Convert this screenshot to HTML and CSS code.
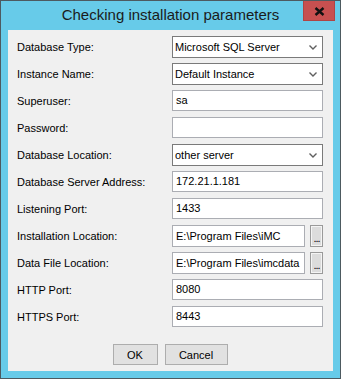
FILE: index.html
```html
<!DOCTYPE html>
<html lang="en">
<head>
    <meta charset="UTF-8">
    <title>Checking installation parameters</title>
    <link rel="stylesheet" href="styles.css">
</head>
<body>
    <div class="window">
        <div class="titlebar">
            <span></span>
            <div class="title">Checking installation parameters</div>
            <div class="close">
                <svg width="11" height="9" viewBox="0 0 11 9">
                    <path d="M1.5 1 L9.5 8 M9.5 1 L1.5 8" stroke="#111" stroke-width="2.4" fill="none"/>
                </svg>
            </div>
        </div>

        <div class="panel">
            <div class="form">
                <label>Database Type:</label>
                <div class="combo"><span>Microsoft SQL Server</span><svg class="arrow" width="8" height="5" viewBox="0 0 8 5"><path d="M0.5 0.5 L4 4 L7.5 0.5" stroke="#606060" stroke-width="1.4" fill="none"/></svg></div>

                <label>Instance Name:</label>
                <div class="combo"><span>Default Instance</span><svg class="arrow" width="8" height="5" viewBox="0 0 8 5"><path d="M0.5 0.5 L4 4 L7.5 0.5" stroke="#606060" stroke-width="1.4" fill="none"/></svg></div>

                <label>Superuser:</label>
                <div class="textbox">sa</div>

                <label>Password:</label>
                <div class="textbox"></div>

                <label>Database Location:</label>
                <div class="combo"><span>other server</span><svg class="arrow" width="8" height="5" viewBox="0 0 8 5"><path d="M0.5 0.5 L4 4 L7.5 0.5" stroke="#606060" stroke-width="1.4" fill="none"/></svg></div>

                <label>Database Server Address:</label>
                <div class="textbox">172.21.1.181</div>

                <label>Listening Port:</label>
                <div class="textbox">1433</div>

                <label>Installation Location:</label>
                <div class="path-row">
                    <div class="textbox">E:\Program Files\iMC</div>
                    <div class="browse">...</div>
                </div>

                <label>Data File Location:</label>
                <div class="path-row">
                    <div class="textbox">E:\Program Files\imcdata</div>
                    <div class="browse">...</div>
                </div>

                <label>HTTP Port:</label>
                <div class="textbox">8080</div>

                <label>HTTPS Port:</label>
                <div class="textbox">8443</div>
            </div>

            <div class="actions">
                <button class="button ok">OK</button>
                <button class="button cancel">Cancel</button>
            </div>
        </div>
    </div>
</body>
</html>
```

FILE: styles.css
```css
body {
    margin: 0;
    padding: 0;
    font-family: "Liberation Sans", Arial, sans-serif;
    font-size: 11px;
    color: #000;
    background-color: #67cbe9;
}
.window {
    width: 341px;
    height: 379px;
    box-sizing: border-box;
    border: 1px solid #4d5a60;
    background-color: #67cbe9;
    padding: 0 7px 7px 7px;
}
.titlebar {
    height: 29px;
    display: grid;
    grid-template-columns: 1fr auto 1fr;
    margin: 0 -1px 0 -1px;
}
.title {
    font-size: 15px;
    line-height: 28px;
    color: #1b1b1b;
    white-space: nowrap;
}
.close {
    justify-self: end;
    align-self: start;
    width: 32px;
    height: 20px;
    margin-right: -1px;
    background-color: #c75050;
    box-sizing: border-box;
    border: 1px solid #b04444;
    border-top: none;
    display: flex;
    align-items: center;
    justify-content: center;
}
.close svg {
    margin-top: 2px;
}
.panel {
    height: 341px;
    box-sizing: border-box;
    background-color: #f0f0f0;
    padding: 6px 10px 0 9px;
}
.form {
    display: grid;
    grid-template-columns: 155px 151px;
    grid-auto-rows: 22px;
    row-gap: 5px;
}
.form label {
    line-height: 22px;
    white-space: nowrap;
}
.combo {
    height: 22px;
    box-sizing: border-box;
    border: 1px solid #7a7a7a;
    background-color: #fff;
    display: flex;
    align-items: center;
    justify-content: space-between;
    padding: 0 5px 0 2px;
}
.textbox {
    height: 21px;
    box-sizing: border-box;
    border: 1px solid #abadb3;
    background-color: #fff;
    line-height: 19px;
    padding: 0 3px;
    white-space: nowrap;
    overflow: hidden;
}
.path-row {
    display: flex;
    gap: 5px;
}
.path-row .textbox {
    width: 133px;
    flex: none;
    height: 22px;
    line-height: 20px;
}
.browse {
    width: 13px;
    height: 22px;
    box-sizing: border-box;
    border: 1px solid #9a9a9a;
    box-shadow: inset 0 0 0 1px #f4f4f4;
    background-color: #dcdcdc;
    text-align: center;
    line-height: 24px;
    letter-spacing: -1px;
}
.actions {
    display: flex;
    justify-content: center;
    gap: 7px;
    margin-top: 16px;
}
.button {
    height: 21px;
    font-family: "Liberation Sans", Arial, sans-serif;
    font-size: 11px;
    color: #000;
    background-color: #e1e1e1;
    border: 1px solid #adadad;
    padding: 0;
    margin: 0;
}
.ok {
    width: 45px;
}
.cancel {
    width: 63px;
}
```
